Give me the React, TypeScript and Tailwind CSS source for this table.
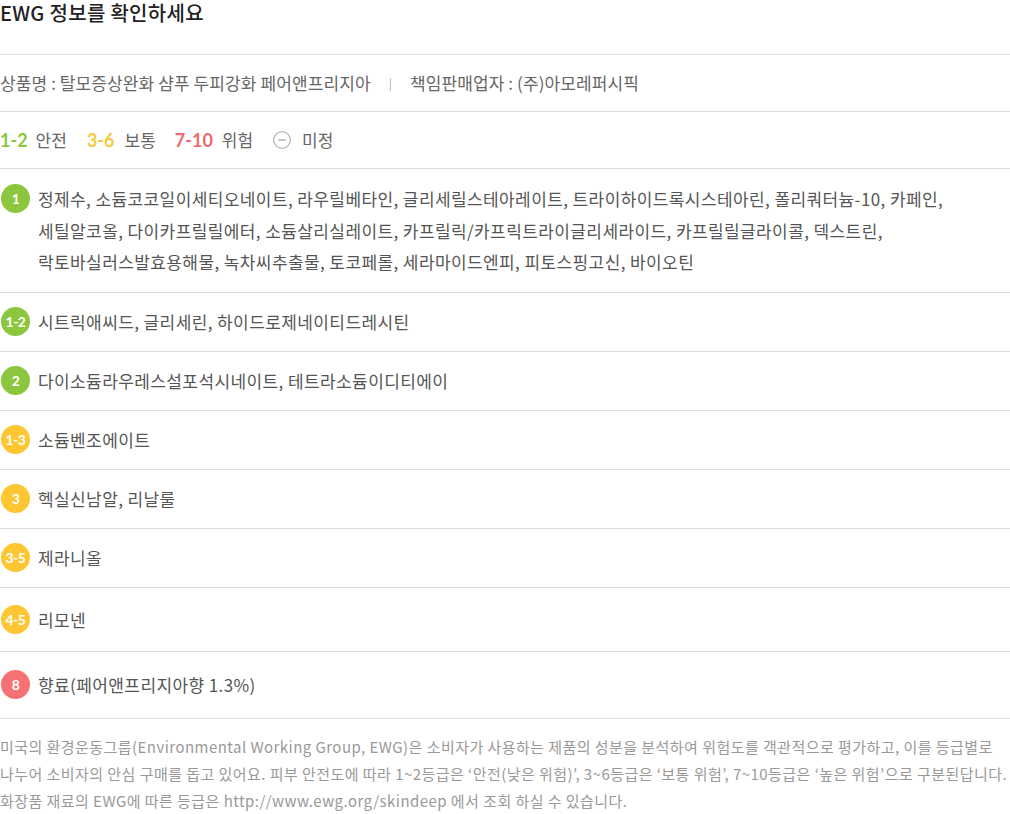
import { MinusCircle } from 'lucide-react'

type Row = { grade: string; tone: 'green' | 'yellow' | 'red'; text: string; pad?: string }

const ROWS: Row[] = [
  {
    grade: '1',
    tone: 'green',
    text: '정제수, 소듐코코일이세티오네이트, 라우릴베타인, 글리세릴스테아레이트, 트라이하이드록시스테아린, 폴리쿼터늄-10, 카페인, 세틸알코올, 다이카프릴릴에터, 소듐살리실레이트, 카프릴릭/카프릭트라이글리세라이드, 카프릴릴글라이콜, 덱스트린, 락토바실러스발효용해물, 녹차씨추출물, 토코페롤, 세라마이드엔피, 피토스핑고신, 바이오틴',
    pad: 'py-[14px]',
  },
  { grade: '1-2', tone: 'green', text: '시트릭애씨드, 글리세린, 하이드로제네이티드레시틴' },
  { grade: '2', tone: 'green', text: '다이소듐라우레스설포석시네이트, 테트라소듐이디티에이' },
  { grade: '1-3', tone: 'yellow', text: '소듐벤조에이트' },
  { grade: '3', tone: 'yellow', text: '헥실신남알, 리날룰' },
  { grade: '3-5', tone: 'yellow', text: '제라니올' },
  { grade: '4-5', tone: 'yellow', text: '리모넨', pad: 'py-[16px]' },
  { grade: '8', tone: 'red', text: '향료(페어앤프리지아향 1.3%)', pad: 'py-[17px]' },
]

const BADGE = {
  green: 'bg-[#8cc63f]',
  yellow: 'bg-[#fdc632]',
  red: 'bg-[#f57173]',
}

const KR = "font-['Noto_Sans_CJK_KR','Noto_Sans',sans-serif]"

export default function App() {
  return (
    <div className={`${KR} w-[1010px] bg-white text-[#555]`}>
      <h2 className="pb-[14px] text-[20px] leading-[26px] font-medium tracking-[0.3px] text-[#222]">
        EWG 정보를 확인하세요
      </h2>

      <div className="mt-[14px] flex h-[57px] items-center border-t border-[#dcdcdc] text-[17px] leading-[26px] tracking-[0.1px] text-[#666]">
        <span>상품명 : 탈모증상완화 샴푸 두피강화 페어앤프리지아</span>
        <span className="mx-[18px] text-[12px] text-[#aaa]">|</span>
        <span>책임판매업자 : (주)아모레퍼시픽</span>
      </div>

      {/* 등급 범례 */}
      <div className="flex h-[57px] items-center border-t border-[#dcdcdc] text-[17px] leading-[26px] text-[#666]">
        <span className="font-['Lato',sans-serif] text-[18px] font-bold text-[#8cc63f]">1-2</span>
        <span className="ml-[8px]">안전</span>
        <span className="ml-[20px] font-['Lato',sans-serif] text-[18px] font-bold text-[#f8c83b]">3-6</span>
        <span className="ml-[10px]">보통</span>
        <span className="ml-[19px] font-['Lato',sans-serif] text-[18px] font-bold text-[#ee6a6c]">7-10</span>
        <span className="ml-[9px]">위험</span>
        <MinusCircle className="ml-[19px] h-[20px] w-[20px] text-[#b5b5b5]" strokeWidth={1.6} />
        <span className="ml-[10px]">미정</span>
      </div>

      <ul>
        {ROWS.map((r) => (
          <li
            key={r.grade}
            className={`flex items-start gap-[8px] border-t border-[#dcdcdc] ${r.pad ?? 'py-[13.3px]'}`}
          >
            <span
              className={`ml-[1px] mt-[1px] flex h-[29px] w-[29px] shrink-0 items-center justify-center rounded-full font-['Lato',sans-serif] text-[14px] font-bold tracking-[-0.5px] text-white ${BADGE[r.tone]}`}
            >
              {r.grade}
            </span>
            <p className="break-keep text-[17px] leading-[31.5px] tracking-[0.4px] text-[#555]">{r.text}</p>
          </li>
        ))}
      </ul>

      <p className="whitespace-nowrap border-t border-[#dcdcdc] pt-[14px] text-[15px] leading-[27px] tracking-[0.45px] text-[#999]">
        미국의 환경운동그룹(Environmental Working Group, EWG)은 소비자가 사용하는 제품의 성분을 분석하여 위험도를 객관적으로 평가하고, 이를 등급별로
        <br />
        나누어 소비자의 안심 구매를 돕고 있어요. 피부 안전도에 따라 1~2등급은 ‘안전(낮은 위험)’, 3~6등급은 ‘보통 위험’, 7~10등급은 ‘높은 위험’으로 구분된답니다.
        <br />
        화장품 재료의 EWG에 따른 등급은 http://www.ewg.org/skindeep 에서 조회 하실 수 있습니다.
      </p>
    </div>
  )
}
